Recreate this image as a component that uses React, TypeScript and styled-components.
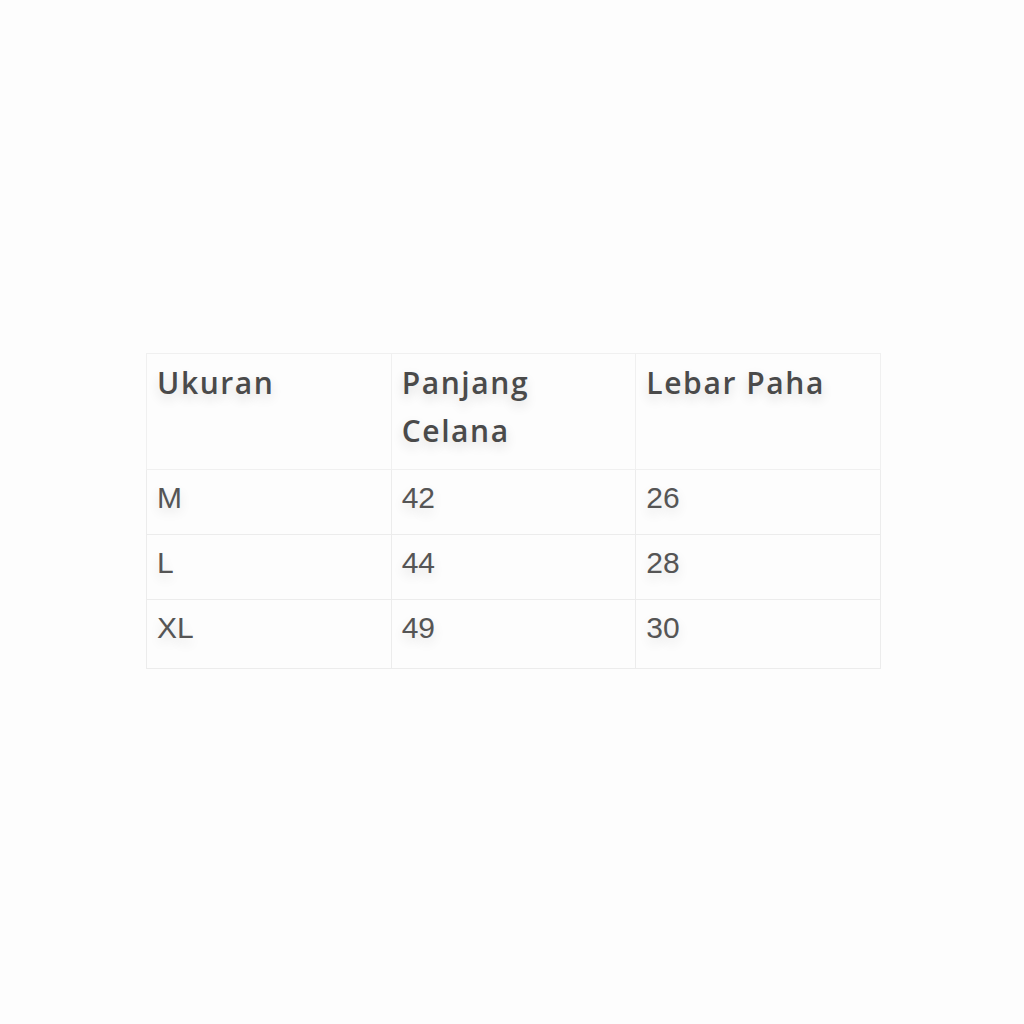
import React from 'react'
import styled, { createGlobalStyle } from 'styled-components'

const GlobalStyle = createGlobalStyle`
  html, body {
    margin: 0;
    padding: 0;
    background: #fdfdfd;
  }
`

const Page = styled.div`
  width: 1024px;
  height: 1024px;
  padding: 353px 0 0 146px;
  box-sizing: border-box;
`

const Table = styled.table`
  width: 735px;
  border-collapse: collapse;
  table-layout: fixed;
`

const HeadCell = styled.th`
  text-align: left;
  vertical-align: top;
  padding: 5px 10px 14px;
  border: 1px solid #f0f0f0;
  font-family: 'Open Sans', Lato, sans-serif;
  font-weight: 600;
  font-size: 30px;
  letter-spacing: 1.6px;
  line-height: 48px;
  color: #4a4a4a;
  text-shadow: 0 5px 12px rgba(0, 0, 0, 0.14);
`

const Cell = styled.td<{ $last?: boolean }>`
  text-align: left;
  vertical-align: top;
  padding: ${({ $last }) => ($last ? '4px 10px 16px' : '4px 10px 12px')};
  border: 1px solid #ececec;
  font-family: 'Liberation Sans', Arial, sans-serif;
  font-size: 30px;
  line-height: 48px;
  color: #555555;
  text-shadow: 0 5px 12px rgba(0, 0, 0, 0.12);
`

const rows = [
  ['M', '42', '26'],
  ['L', '44', '28'],
  ['XL', '49', '30']
]

export default function App() {
  return (
    <>
      <GlobalStyle />
      <Page>
        <Table>
          <thead>
            <tr>
              <HeadCell>Ukuran</HeadCell>
              <HeadCell>Panjang Celana</HeadCell>
              <HeadCell>Lebar Paha</HeadCell>
            </tr>
          </thead>
          <tbody>
            {rows.map((r, i) => (
              <tr key={r[0]}>
                {r.map((v, j) => (
                  <Cell key={j} $last={i === rows.length - 1}>
                    {v}
                  </Cell>
                ))}
              </tr>
            ))}
          </tbody>
        </Table>
      </Page>
    </>
  )
}
